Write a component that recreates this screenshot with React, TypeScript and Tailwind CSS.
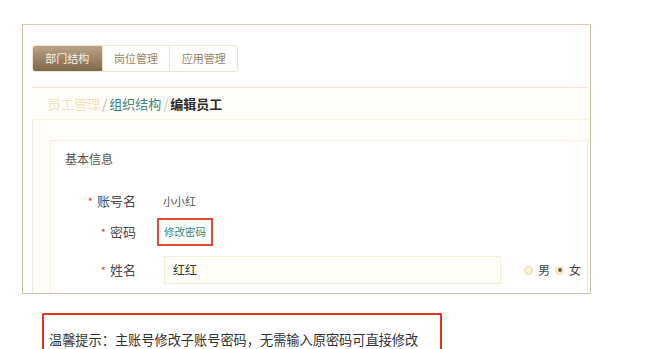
import React from "react";

const font = { fontFamily: '"Noto Sans CJK SC", "Noto Sans", sans-serif' };

const tabs = ["部门结构", "岗位管理", "应用管理"];

const FieldLabel = ({ text }: { text: string }) => (
  <div className="flex w-[85px] shrink-0 items-center justify-end text-[13px] text-[#4a4a4a]">
    <span className="mr-[4px] text-[11px] text-[#e0452c]">*</span>
    <span>{text}</span>
  </div>
);

const Radio = ({ checked, label }: { checked?: boolean; label: string }) => (
  <label className="flex items-center">
    <span className="flex h-[9px] w-[9px] items-center justify-center rounded-full border border-[#ecdcae] bg-[#fbf1d2]">
      {checked && <span className="h-[4px] w-[4px] rounded-full bg-[#6f5d45]" />}
    </span>
    <span className="ml-[5px] text-[12px] text-[#444]">{label}</span>
  </label>
);

const App = () => {
  return (
    <div className="h-[349px] w-[657px] overflow-hidden bg-white" style={font}>
      <div className="ml-[22px] mt-[24px] h-[270px] w-[569px] overflow-hidden border border-[#cdc4ab] border-t-[#d9cfb0] bg-white pl-[9px] pr-[2px] pt-[20px]">
        {/* tabs */}
        <div className="flex h-[27px] w-[206px] overflow-hidden rounded-[3px] border border-[#efe6cf]">
          {tabs.map((tab, i) => (
            <div
              key={tab}
              className={
                i === 0
                  ? "flex w-[69px] items-center justify-center bg-gradient-to-b from-[#b9a585] to-[#7e6a4b] text-[11px] text-[#f6efe0]"
                  : "flex w-[68px] items-center justify-center border-l border-[#ede3ca] text-[11px] text-[#9a8766]"
              }
            >
              {tab}
            </div>
          ))}
        </div>

        {/* breadcrumb */}
        <div className="mt-[15px] flex h-[33px] items-center border-t border-b border-t-[#f5e4da] border-b-[#fbf4d8] bg-[#fffefa] pl-[16px] text-[13px]">
          <span className="text-[#f1e1c0]">员工管理</span>
          <span className="mx-[2px] text-[#b9b4a8]">/</span>
          <span className="text-[#3f8676]">组织结构</span>
          <span className="mx-[2px] text-[#c9c2b0]">/</span>
          <span className="font-bold text-[#2b2b2b]">编辑员工</span>
        </div>

        {/* content */}
        <div className="h-[200px] border-l border-[#f1ecdd] bg-[#fffefb] pl-[17px] pt-[20px]">
          <div className="h-[180px] border-t border-l border-r border-[#f6f1e3] bg-white pt-[9px]">
            <div className="pl-[14px] text-[12px] leading-[17px] text-[#555]">基本信息</div>

            <div className="mt-[20px] flex h-[28px] items-center">
              <FieldLabel text="账号名" />
              <span className="ml-[27px] text-[11px] text-[#555]">小小红</span>
            </div>

            <div className="mt-[3px] flex h-[28px] items-center">
              <FieldLabel text="密码" />
              <a className="ml-[21px] flex h-[28px] items-center border-2 border-[#e4482e] px-[5px] text-[10.5px] text-[#2f8a7c]">
                修改密码
              </a>
            </div>

            <div className="mt-[10px] flex h-[28px] items-center">
              <FieldLabel text="姓名" />
              <div className="ml-[28px] flex h-[28px] w-[337px] items-center border border-[#f5efda] bg-[#fffef9] pl-[8px] text-[12px] text-[#333]">
                红红
              </div>
              <div className="ml-[23px] flex items-center gap-[5px]">
                <Radio label="男" />
                <Radio checked label="女" />
              </div>
            </div>
          </div>
        </div>
      </div>

      {/* tip */}
      <div className="ml-[42px] mt-[19px] h-[36px] w-[400px] rounded-t-[2px] border-2 border-b-0 border-[#e4321c] pl-[5px] pt-[17px] text-[13.2px] leading-[16px] whitespace-nowrap text-[#333]">
        温馨提示：主账号修改子账号密码，无需输入原密码可直接修改
      </div>
    </div>
  );
};

export default App;
